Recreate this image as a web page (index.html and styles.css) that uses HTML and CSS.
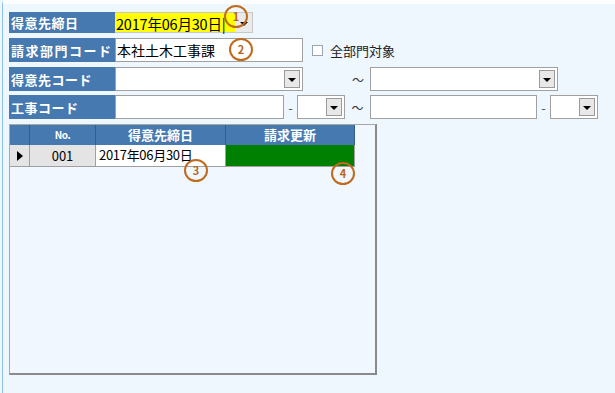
FILE: index.html
```html
<!DOCTYPE html>
<html lang="ja">
<head>
    <meta charset="utf-8">
    <title>請求更新</title>
    <link rel="stylesheet" href="styles.css">
</head>
<body>
    <main class="panel">
        <div class="row r1">
            <div class="label">得意先締日</div>
            <div class="combo date">
                <div class="field yellow">2017年06月30日|</div>
                <div class="drop flat"><span class="arrow"></span></div>
                <span class="mark m1">1</span>
            </div>
        </div>
        <div class="row r2">
            <div class="label">請求部門コード</div>
            <div class="field w188 big">本社土木工事課<span class="mark m2">2</span></div>
            <label class="check"><span class="box"></span>全部門対象</label>
        </div>
        <div class="row r3">
            <div class="label">得意先コード</div>
            <div class="combo w188">
                <div class="field"></div>
                <div class="drop"><span class="arrow"></span></div>
            </div>
            <span class="tilde wide">～</span>
            <div class="combo w188">
                <div class="field"></div>
                <div class="drop"><span class="arrow"></span></div>
            </div>
        </div>
        <div class="row r4">
            <div class="label">工事コード</div>
            <div class="field w169"></div>
            <span class="dash">-</span>
            <div class="combo w48">
                <div class="field"></div>
                <div class="drop"><span class="arrow"></span></div>
            </div>
            <span class="tilde">～</span>
            <div class="field w167"></div>
            <span class="dash">-</span>
            <div class="combo w48">
                <div class="field"></div>
                <div class="drop"><span class="arrow"></span></div>
            </div>
        </div>

        <section class="grid">
            <div class="ghead">
                <div class="rh"></div>
                <div class="c1">No.</div>
                <div class="c2">得意先締日</div>
                <div class="c3">請求更新</div>
            </div>
            <div class="grow">
                <div class="rh sel"><span class="tri"></span></div>
                <div class="c1 num">001</div>
                <div class="c2 val">2017年06月30日<span class="mark m3">3</span></div>
                <div class="c3 done"><span class="mark m4">4</span></div>
            </div>
        </section>
    </main>
</body>
</html>
```
FILE: styles.css
```css
body {
    margin: 0;
    background: #eef6fe;
    font-family: "Noto Sans CJK JP", "Liberation Sans", sans-serif;
}

.panel {
    height: 393px;
    box-sizing: border-box;
    margin-left: 2px;
    border-left: 1px solid #8ec2ec;
    border-top: 4px solid #fbfdff;
    padding: 8px 0 0 6px;
}

.row {
    display: flex;
    align-items: center;
    height: 24px;
    margin-bottom: 5px;
}

.r1 {
    height: 21px;
    margin-bottom: 5px;
}

.r3 {
    margin-bottom: 4px;
}

.label {
    width: 106px;
    height: 100%;
    background: #4679b0;
    color: #fff;
    font-weight: bold;
    font-size: 13px;
    line-height: 21px;
    padding-left: 2px;
    box-sizing: border-box;
    display: flex;
    align-items: center;
    letter-spacing: 0.5px;
}

.r2 .label {
    letter-spacing: 1.5px;
}

.field {
    position: relative;
    height: 100%;
    box-sizing: border-box;
    background: #fff;
    border: 1px solid #a0a0a0;
    font-size: 14px;
    line-height: 20px;
    padding-left: 1px;
    color: #000;
}

.yellow {
    background: #ffff00;
    border: none;
    width: 120px;
    font-size: 14.5px;
    letter-spacing: -0.2px;
    line-height: 21px;
}

.big {
    line-height: 22px;
}

.combo {
    position: relative;
    display: flex;
    height: 100%;
    background: #fff;
    border: 1px solid #a0a0a0;
    box-sizing: border-box;
}

.combo .field {
    flex: 1;
    border: none;
}

.combo.date {
    border: 1px solid #c8c8c8;
    border-left: none;
}

.drop {
    width: 14px;
    margin: 2px;
    background: #e8e8e8;
    border: 1px solid #9a9a9a;
    display: flex;
    align-items: center;
    justify-content: center;
}

.drop.flat {
    margin: 0;
    width: 17px;
    border: none;
    background: #eaeaea;
}

.arrow {
    width: 0;
    height: 0;
    border-left: 4px solid transparent;
    border-right: 4px solid transparent;
    border-top: 4px solid #000;
    margin-top: 2px;
}

.w188 {
    width: 188px;
}

.w169 {
    width: 169px;
}

.w167 {
    width: 167px;
}

.w48 {
    width: 48px;
}

.check {
    display: flex;
    align-items: center;
    margin-left: 9px;
    font-size: 13px;
    color: #222;
}

.box {
    width: 9px;
    height: 9px;
    border: 1px solid #9aa4ae;
    background: #fff;
    margin-right: 7px;
}

.tilde {
    font-size: 12px;
    color: #333;
    width: 25px;
    text-align: center;
}

.tilde.wide {
    width: 67px;
    text-align: right;
    padding-right: 6px;
    box-sizing: border-box;
}

.dash {
    width: 13px;
    text-align: center;
    font-size: 13px;
    color: #555;
}

.mark {
    position: absolute;
    width: 20px;
    height: 19px;
    border: 2px solid #c06a1e;
    border-radius: 50%;
    color: #b8651c;
    font-size: 11px;
    font-weight: bold;
    line-height: 19px;
    text-align: center;
    letter-spacing: 0;
}

.m1 {
    left: 109px;
    top: -8px;
}

.m2 {
    left: 113px;
    top: -1px;
}

.m3 {
    left: 88px;
    top: 14px;
}

.m4 {
    left: 105px;
    top: 17px;
}

.grid {
    width: 368px;
    height: 251px;
    margin-top: 4px;
    box-sizing: border-box;
    border-top: 1px solid #a8a8a8;
    border-left: 1px solid #a8a8a8;
    border-right: 2px solid #8a8a8a;
    border-bottom: 2px solid #8a8a8a;
    background: #f0f7fe;
}

.ghead,
.grow {
    display: flex;
    height: 20px;
}

.grow {
    height: 21px;
    border-bottom: 1px solid #a0a0a0;
    width: 345px;
}

.ghead div {
    background: #4679b0;
    color: #fff;
    font-weight: bold;
    font-size: 13px;
    text-align: center;
    line-height: 20px;
    border-right: 1px solid #2f5f90;
    box-sizing: border-box;
}

.ghead .c1 {
    font-size: 10px;
    letter-spacing: -0.5px;
}

.rh {
    width: 20px;
    box-sizing: border-box;
}

.c1 {
    width: 66px;
}

.c2 {
    width: 130px;
}

.c3 {
    width: 129px;
}

.grow div {
    position: relative;
    box-sizing: border-box;
    border-right: 1px solid #a0a0a0;
    height: 100%;
}

.sel {
    background: #e4e4e4;
    display: flex;
    align-items: center;
    justify-content: center;
}

.tri {
    width: 0;
    height: 0;
    border-top: 5px solid transparent;
    border-bottom: 5px solid transparent;
    border-left: 6px solid #000;
}

.num {
    background: #e4e4e4;
    text-align: center;
    font-size: 13px;
    line-height: 21px;
}

.val {
    background: #fff;
    font-size: 13px;
    line-height: 19px;
    padding-left: 3px;
    letter-spacing: -0.3px;
}

.done {
    background: #008000;
}
```
